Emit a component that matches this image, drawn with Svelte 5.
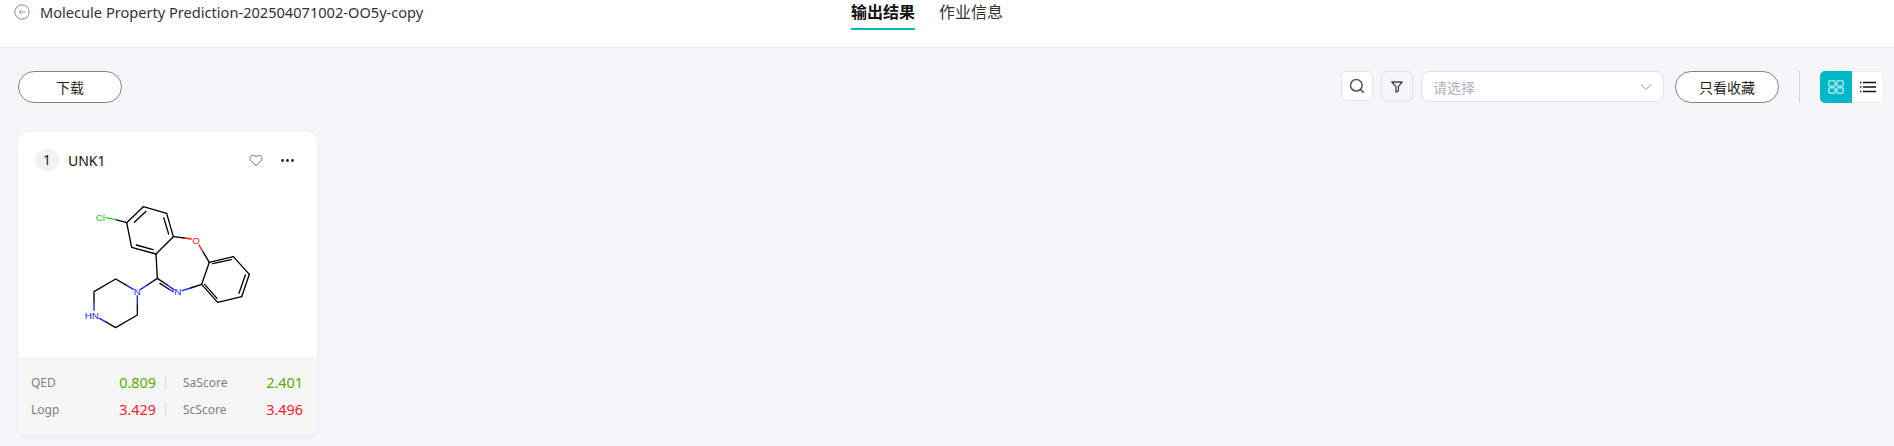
<script>
  const stats = [
    { label: 'QED', value: '0.809', tone: 'good' },
    { label: 'SaScore', value: '2.401', tone: 'good' },
    { label: 'Logp', value: '3.429', tone: 'bad' },
    { label: 'ScScore', value: '3.496', tone: 'bad' }
  ];
  const a = {
    c1:[170,113],c2:[220,65],c3:[290,85],c4:[310,155],c5:[258,207],c6:[185,187],
    c7:[418,232],c8:[490,215],c9:[538,268],c10:[515,335],c11:[443,352],c12:[395,298],c13:[262,280]
  };
  const black = [
    ['c1','c2'],['c2','c3'],['c3','c4'],['c4','c5'],['c5','c6'],['c6','c1'],
    ['c7','c8'],['c8','c9'],['c9','c10'],['c10','c11'],['c11','c12'],['c12','c7'],['c5','c13']
  ];
  const blackBonds = black.map(([p, q]) => [...a[p], ...a[q]]);
  const inner = [
    [193,112,228,79],[281,98,296,147],[249,194,199,180],
    [428,236,484,224],[526,270,507,325],[441,340,404,298]
  ];
</script>

<div class="page">
  <header class="top">
    <div class="title">
      <svg class="back" viewBox="0 0 16 16" width="16" height="16" aria-hidden="true">
        <circle cx="8" cy="8" r="7.2" fill="none" stroke="#8f8f8f" stroke-width="1"/>
        <path d="M11.5 8H5.2M7.6 5.8 5.2 8l2.4 2.2" fill="none" stroke="#9a9a9a" stroke-width="1"/>
      </svg>
      <span>Molecule Property Prediction-202504071002-OO5y-copy</span>
    </div>
    <nav class="tabs">
      <span class="tab active">输出结果</span>
      <span class="tab">作业信息</span>
    </nav>
  </header>

  <section class="toolbar">
    <button class="pill download">下载</button>
    <div class="tools">
      <button class="icon-btn">
        <svg viewBox="0 0 16 16" width="16" height="16" aria-hidden="true">
          <circle cx="7.3" cy="7.3" r="5.8" fill="none" stroke="#555" stroke-width="1.5"/>
          <path d="M11.5 11.5 14.6 14.6" stroke="#555" stroke-width="1.7"/>
        </svg>
      </button>
      <button class="icon-btn filter">
        <svg viewBox="0 0 12 12" width="12" height="12" aria-hidden="true">
          <path d="M.8 1h10.4L7.4 5.6v4.2L5 11.2V5.6Z" fill="none" stroke="#444" stroke-width="1.3" stroke-linejoin="round"/>
        </svg>
      </button>
      <div class="select">
        <span>请选择</span>
        <svg viewBox="0 0 12 8" width="12" height="8" aria-hidden="true">
          <path d="M1 1.5 6 6.3l5-4.8" fill="none" stroke="#b4b8c0" stroke-width="1.1"/>
        </svg>
      </div>
      <button class="pill fav">只看收藏</button>
      <i class="sep"></i>
      <div class="toggle">
        <span class="opt on">
          <svg viewBox="0 0 16 14" width="16" height="14" aria-hidden="true">
            <g fill="none" stroke="#9be3e9" stroke-width="1.6">
              <rect x="0.8" y="0.8" width="6.4" height="5.4" rx="1.6"/>
              <rect x="8.8" y="0.8" width="6.4" height="5.4" rx="1.6"/>
              <rect x="0.8" y="7.8" width="6.4" height="5.4" rx="1.6"/>
              <rect x="8.8" y="7.8" width="6.4" height="5.4" rx="1.6"/>
            </g>
          </svg>
        </span>
        <span class="opt off">
          <svg viewBox="0 0 16 12" width="16" height="12" aria-hidden="true">
            <path d="M3 1.5h13M3 6h13M3 10.5h13" stroke="#111" stroke-width="1.4"/>
            <path d="M0 1.5h1.4M0 6h1.4M0 10.5h1.4" stroke="#111" stroke-width="1.4"/>
          </svg>
        </span>
      </div>
    </div>
  </section>

  <article class="card">
    <div class="card-head">
      <span class="index">1</span>
      <span class="name">UNK1</span>
      <svg class="heart" viewBox="0 0 16 15" width="14" height="13" aria-hidden="true">
        <path d="M8 13.7 2.1 7.8C.6 6.2.7 3.8 2.2 2.4c1.6-1.4 3.9-1.2 5.3.4l.5.6.5-.6c1.4-1.6 3.7-1.8 5.3-.4 1.5 1.4 1.6 3.8.1 5.4Z" fill="none" stroke="#8c8c8c" stroke-width="1.2"/>
      </svg>
      <svg class="more" viewBox="0 0 13 3" width="13" height="3" aria-hidden="true">
        <circle cx="1.5" cy="1.5" r="1.4" fill="#222"/>
        <circle cx="6.5" cy="1.5" r="1.4" fill="#222"/>
        <circle cx="11.5" cy="1.5" r="1.4" fill="#222"/>
      </svg>
    </div>
    <div class="mol">
      <svg viewBox="0 0 570 465" width="190" height="155" role="img" aria-label="UNK1 structure">
        <g stroke="#000" stroke-width="4" stroke-linecap="round" fill="none">
          {#each blackBonds as b}
            <line x1={b[0]} y1={b[1]} x2={b[2]} y2={b[3]}/>
          {/each}
          {#each inner as b}
            <line x1={b[0]} y1={b[1]} x2={b[2]} y2={b[3]}/>
          {/each}
          <path d="M170 113 137 104M310 155 344 159M418 232 398 199M395 298 362 309M262 280 232 300M262 280 292 300M270 295 296 312M202 390 202 360M202 390 137 428M137 428 106 410M137 282 170 301M137 282 72 320M72 320 72 351"/>
        </g>
        <g stroke-width="4" stroke-linecap="round" fill="none">
          <path d="M137 104 108 98" stroke="#22cc22"/>
          <path d="M344 159 364 162M398 199 387 180" stroke="#ff1414"/>
          <path d="M362 309 336 317M292 300 312 314M296 312 310 320M232 300 212 313M170 301 190 313M202 360 202 332M72 351 72 376M106 410 88 400" stroke="#1c1cff"/>
        </g>
        <g class="atoms">
          <text x="77" y="107" fill="#22cc22">Cl</text>
          <text x="367" y="177" fill="#ff1414">O</text>
          <text x="313" y="331" fill="#1c1cff">N</text>
          <text x="191" y="331" fill="#1c1cff">N</text>
          <text x="44" y="403" fill="#1c1cff">HN</text>
        </g>
      </svg>
    </div>
    <div class="stats">
      {#each stats as s, i}
        <div class="stat" class:right={i % 2 === 1}>
          <span class="label">{s.label}</span>
          <span class="value {s.tone}">{s.value}</span>
        </div>
      {/each}
    </div>
  </article>
</div>

<style>
  :global(body) {
    margin: 0;
    background: #f5f6fa;
  }
  .page {
    height: 446px;
    overflow: hidden;
    background: #f5f6fa;
    color: #1f1f1f;
    font-family: "Noto Sans", "Noto Sans CJK SC", sans-serif;
    font-size: 14px;
  }
  .top {
    box-sizing: border-box;
    height: 48px;
    display: grid;
    grid-template-columns: 851px auto;
    background: #fff;
    border-bottom: 1px solid #e6e8ee;
  }
  .title {
    display: flex;
    align-items: center;
    gap: 10px;
    height: 24px;
    padding-left: 14px;
    font-size: 14.6px;
    color: #333;
    white-space: nowrap;
  }
  .back { flex: none; }
  .tabs {
    display: flex;
    gap: 24px;
    font-family: "Noto Sans CJK SC", sans-serif;
  }
  .tab {
    box-sizing: border-box;
    width: 64px;
    height: 30px;
    font-size: 16px;
    line-height: 22px;
    color: #333;
  }
  .tab.active {
    color: #111;
    font-weight: 700;
    border-bottom: 2px solid #00b8c8;
  }
  .toolbar {
    display: flex;
    justify-content: space-between;
    align-items: flex-start;
    padding: 23px 10px 0 18px;
    height: 84px;
    box-sizing: border-box;
  }
  .pill {
    box-sizing: border-box;
    height: 32px;
    width: 104px;
    padding: 0;
    background: #fff;
    border: 1px solid #848484;
    border-radius: 16px;
    font: 14px "Noto Sans CJK SC", sans-serif;
    color: #1f1f1f;
  }
  .tools {
    display: flex;
    align-items: flex-start;
  }
  .icon-btn {
    box-sizing: border-box;
    width: 32px;
    height: 30px;
    margin-right: 8px;
    padding: 0;
    display: flex;
    align-items: center;
    justify-content: center;
    background: #fff;
    border: 1px solid #e3e5eb;
    border-radius: 6px;
  }
  .icon-btn.filter { background: #f5f6fa; height: 31px; }
  .select {
    box-sizing: border-box;
    width: 243px;
    height: 31px;
    margin-right: 11px;
    padding: 0 11px;
    display: flex;
    align-items: center;
    justify-content: space-between;
    background: #fff;
    border: 1px solid #dfe2ea;
    border-radius: 8px;
    color: #aeb1b8;
    font: 14px "Noto Sans CJK SC", sans-serif;
  }
  .sep {
    width: 1px;
    height: 32px;
    margin: 0 20px;
    background: #d5d8df;
  }
  .toggle {
    display: flex;
    height: 32px;
    border-radius: 5px;
    overflow: hidden;
    background: #fff;
  }
  .opt {
    box-sizing: border-box;
    width: 32px;
    display: flex;
    align-items: center;
    justify-content: center;
  }
  .opt.on { background: #00b8c8; }
  .opt.off {
    border: 1px solid #e8eaef;
    border-left: 0;
    border-radius: 0 5px 5px 0;
  }
  .card {
    width: 299px;
    height: 304px;
    margin: 0 0 0 18px;
    display: flex;
    flex-direction: column;
    background: #fff;
    border-radius: 10px;
    box-shadow: 0 1px 4px rgba(30, 40, 70, 0.06);
    overflow: hidden;
  }
  .card-head {
    display: flex;
    align-items: center;
    height: 22px;
    padding: 17px 23px 0 17px;
  }
  .index {
    width: 24px;
    height: 22px;
    border-radius: 50%;
    background: #f3f3f3;
    text-align: center;
    line-height: 22px;
    color: #222;
  }
  .name {
    flex: 1;
    margin-left: 9px;
    color: #111;
  }
  .heart { margin-right: 18px; }
  .mol {
    flex: 1;
    padding: 14px 0 0 52px;
  }
  .mol svg { display: block; }
  .atoms text {
    font: 29.5px "Liberation Sans", sans-serif;
  }
  .stats {
    height: 79px;
    box-sizing: border-box;
    padding: 12px 0 0 13px;
    display: grid;
    grid-template-columns: 135px 1fr;
    grid-auto-rows: 27px;
    background: #f6f6f6;
  }
  .stat {
    display: flex;
    align-items: center;
    justify-content: space-between;
  }
  .stat:not(.right) {
    position: relative;
    padding-right: 10px;
  }
  .stat:not(.right)::after {
    content: "";
    position: absolute;
    right: 0;
    top: 6px;
    height: 15px;
    width: 1px;
    background: #dcdcdc;
  }
  .stat.right {
    padding: 0 14px 0 17px;
  }
  .label {
    font-size: 12px;
    color: #808080;
  }
  .value { font-size: 14.4px; }
  .good { color: #5aad00; }
  .bad { color: #f5222d; }
</style>
